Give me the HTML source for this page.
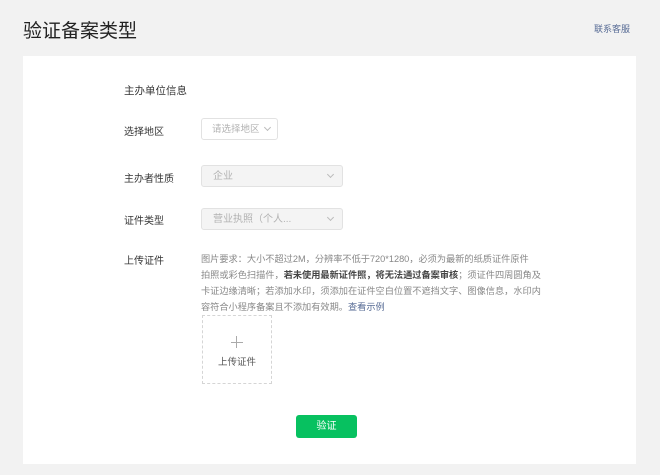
<!DOCTYPE html><html><head><meta charset="utf-8"><style>
*{margin:0;padding:0;box-sizing:border-box}
body{width:660px;height:475px;background:#f2f2f2;font-family:"Liberation Sans","Noto Sans CJK SC",sans-serif;position:relative;overflow:hidden;color:#353535}
.a{position:absolute}
.card{left:23px;top:56px;width:613px;height:408px;background:#fff}
.lab{font-size:10px;color:#353535}
.sel{border:1px solid #e2e2e2;border-radius:3px;font-size:10px;color:#b2b2b2;padding-left:11px;line-height:21px}
.dis{background:#f4f4f4}
.arr{position:absolute;right:9px;top:6px;width:5px;height:5px;border-right:1px solid #bbb;border-bottom:1px solid #bbb;transform:rotate(45deg)}
</style></head><body>
<div class="a" style="left:23px;top:16px;font-size:19px;color:#222">验证备案类型</div>
<div class="a" style="left:594px;top:22px;font-size:9px;color:#576b95">联系客服</div>
<div class="a card"></div>
<div class="a lab" style="left:124px;top:83px;font-size:10.5px">主办单位信息</div>
<div class="a lab" style="left:124px;top:123px">选择地区</div>
<div class="a sel" style="left:201px;top:118px;width:77px;height:22px;font-size:9.5px;padding-left:10px">请选择地区<span class="arr" style="right:7px"></span></div>
<div class="a lab" style="left:124px;top:170px">主办者性质</div>
<div class="a sel dis" style="left:201px;top:165px;width:142px;height:22px">企业<span class="arr"></span></div>
<div class="a lab" style="left:124px;top:212px">证件类型</div>
<div class="a sel dis" style="left:201px;top:208px;width:142px;height:22px">营业执照（个人...<span class="arr"></span></div>
<div class="a lab" style="left:124px;top:252px">上传证件</div>
<div class="a" style="left:201px;top:251px;white-space:nowrap;font-size:9.2px;line-height:16px;color:#888">图片要求：大小不超过2M，分辨率不低于720*1280，必须为最新的纸质证件原件<br>拍照或彩色扫描件，<b style="color:#444">若未使用最新证件照，将无法通过备案审核</b>；须证件四周圆角及<br>卡证边缘清晰；若添加水印，须添加在证件空白位置不遮挡文字、图像信息，水印内<br>容符合小程序备案且不添加有效期。<span style="color:#576b95">查看示例</span></div>
<div class="a" style="left:202px;top:315px;width:70px;height:69px;border:1px dashed #d5d5d5"></div>
<div class="a" style="left:236px;top:336px;width:1px;height:12px;background:#aaa"></div>
<div class="a" style="left:231px;top:342px;width:12px;height:1px;background:#aaa"></div>
<div class="a" style="left:202px;top:354px;width:70px;text-align:center;font-size:9.5px;color:#555">上传证件</div>
<div class="a" style="left:296px;top:415px;width:61px;height:23px;background:#07c160;border-radius:3px;color:#fff;font-size:10px;text-align:center;line-height:23px">验证</div>
</body></html>
